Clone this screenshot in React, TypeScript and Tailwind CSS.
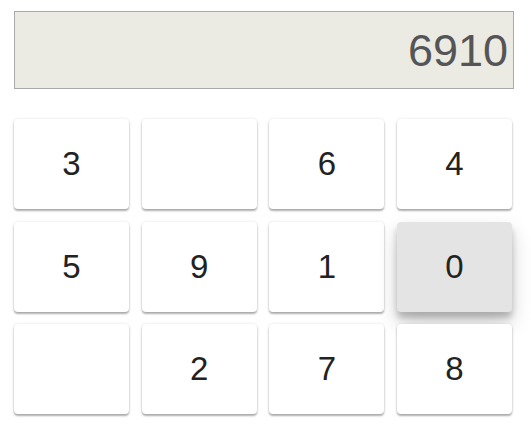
const keys: { label: string; active?: boolean }[] = [
	{ label: "3" },
	{ label: "" },
	{ label: "6" },
	{ label: "4" },
	{ label: "5" },
	{ label: "9" },
	{ label: "1" },
	{ label: "0", active: true },
	{ label: "" },
	{ label: "2" },
	{ label: "7" },
	{ label: "8" },
];

export default function App() {
	return (
		<div
			className="min-h-screen bg-white pl-[14px] pt-[11px]"
			style={{ fontFamily: '"Liberation Sans", Arial, sans-serif' }}
		>
			{/* Display */}
			<div className="flex h-[78px] w-[500px] items-center justify-end border border-[#a9a9a9] bg-[#ebeae3] pr-[5px] pt-[1px] text-[45px] leading-none text-[#555]">
				6910
			</div>

			{/* Keypad */}
			<div className="mt-[30px] grid w-[498px] grid-cols-4 gap-x-[12.67px] gap-y-[12.5px]">
				{keys.map((key, i) => (
					<button
						key={`key-${i}`}
						type="button"
						className={
							key.active
								? "flex h-[90px] items-center justify-center rounded-[4px] bg-[#e4e4e4] text-[33px] text-[#222] shadow-[0_10px_20px_rgba(0,0,0,0.19),0_6px_6px_rgba(0,0,0,0.2)]"
								: "flex h-[90px] items-center justify-center rounded-[4px] bg-white text-[33px] text-[#222] shadow-[0_2px_2px_rgba(0,0,0,0.3),0_0_3px_rgba(0,0,0,0.12)]"
						}
					>
						{key.label}
					</button>
				))}
			</div>
		</div>
	);
}
